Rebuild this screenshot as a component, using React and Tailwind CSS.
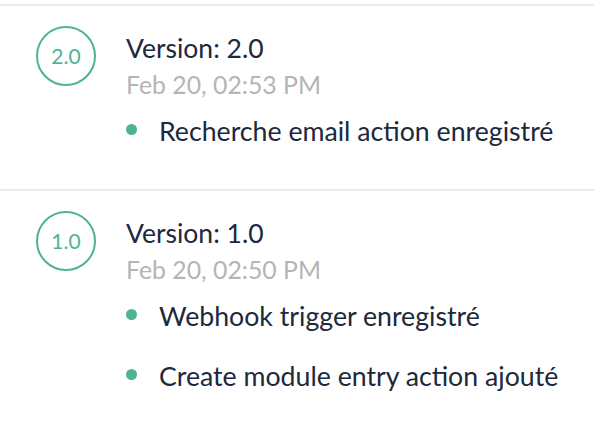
const versions = [
    {
        version: "2.0",
        date: "Feb 20, 02:53 PM",
        changes: ["Recherche email action enregistré"],
    },
    {
        version: "1.0",
        date: "Feb 20, 02:50 PM",
        changes: ["Webhook trigger enregistré", "Create module entry action ajouté"],
    },
];

function VersionItem({ item }) {
    return (
        <div className="flex border-t-2 border-[#ebebeb] pl-[36px] pt-[20px] pb-[40px]">
            <div className="w-[60px] h-[60px] shrink-0 rounded-full border-2 border-[#4fb392] flex items-center justify-center text-[#4fb392] text-[21px]">
                {item.version}
            </div>
            <div className="flex flex-col ml-[30px] pt-[4px]">
                <h3 className="text-[26.5px] leading-[36px] text-[#20283c]">Version: {item.version}</h3>
                <span className="text-[24.8px] leading-[38px] text-[#b5b5b5]">{item.date}</span>
                <ul className="flex flex-col gap-[24px] mt-[9px]">
                    {item.changes.map(change => (
                        <li key={change} className="flex items-start gap-[22px]">
                            <span className="w-[11px] h-[11px] rounded-full bg-[#4fb392] mt-[11px] shrink-0"></span>
                            <span className="text-[26.7px] leading-[36px] text-[#20283c]">{change}</span>
                        </li>
                    ))}
                </ul>
            </div>
        </div>
    );
}

export default function App() {
    return (
        <div className="w-[594px] h-[426px] overflow-hidden bg-white pt-[4px]" style={{ fontFamily: "Lato, 'Noto Sans', sans-serif" }}>
            {versions.map(v => (
                <VersionItem key={v.version} item={v} />
            ))}
        </div>
    );
}
